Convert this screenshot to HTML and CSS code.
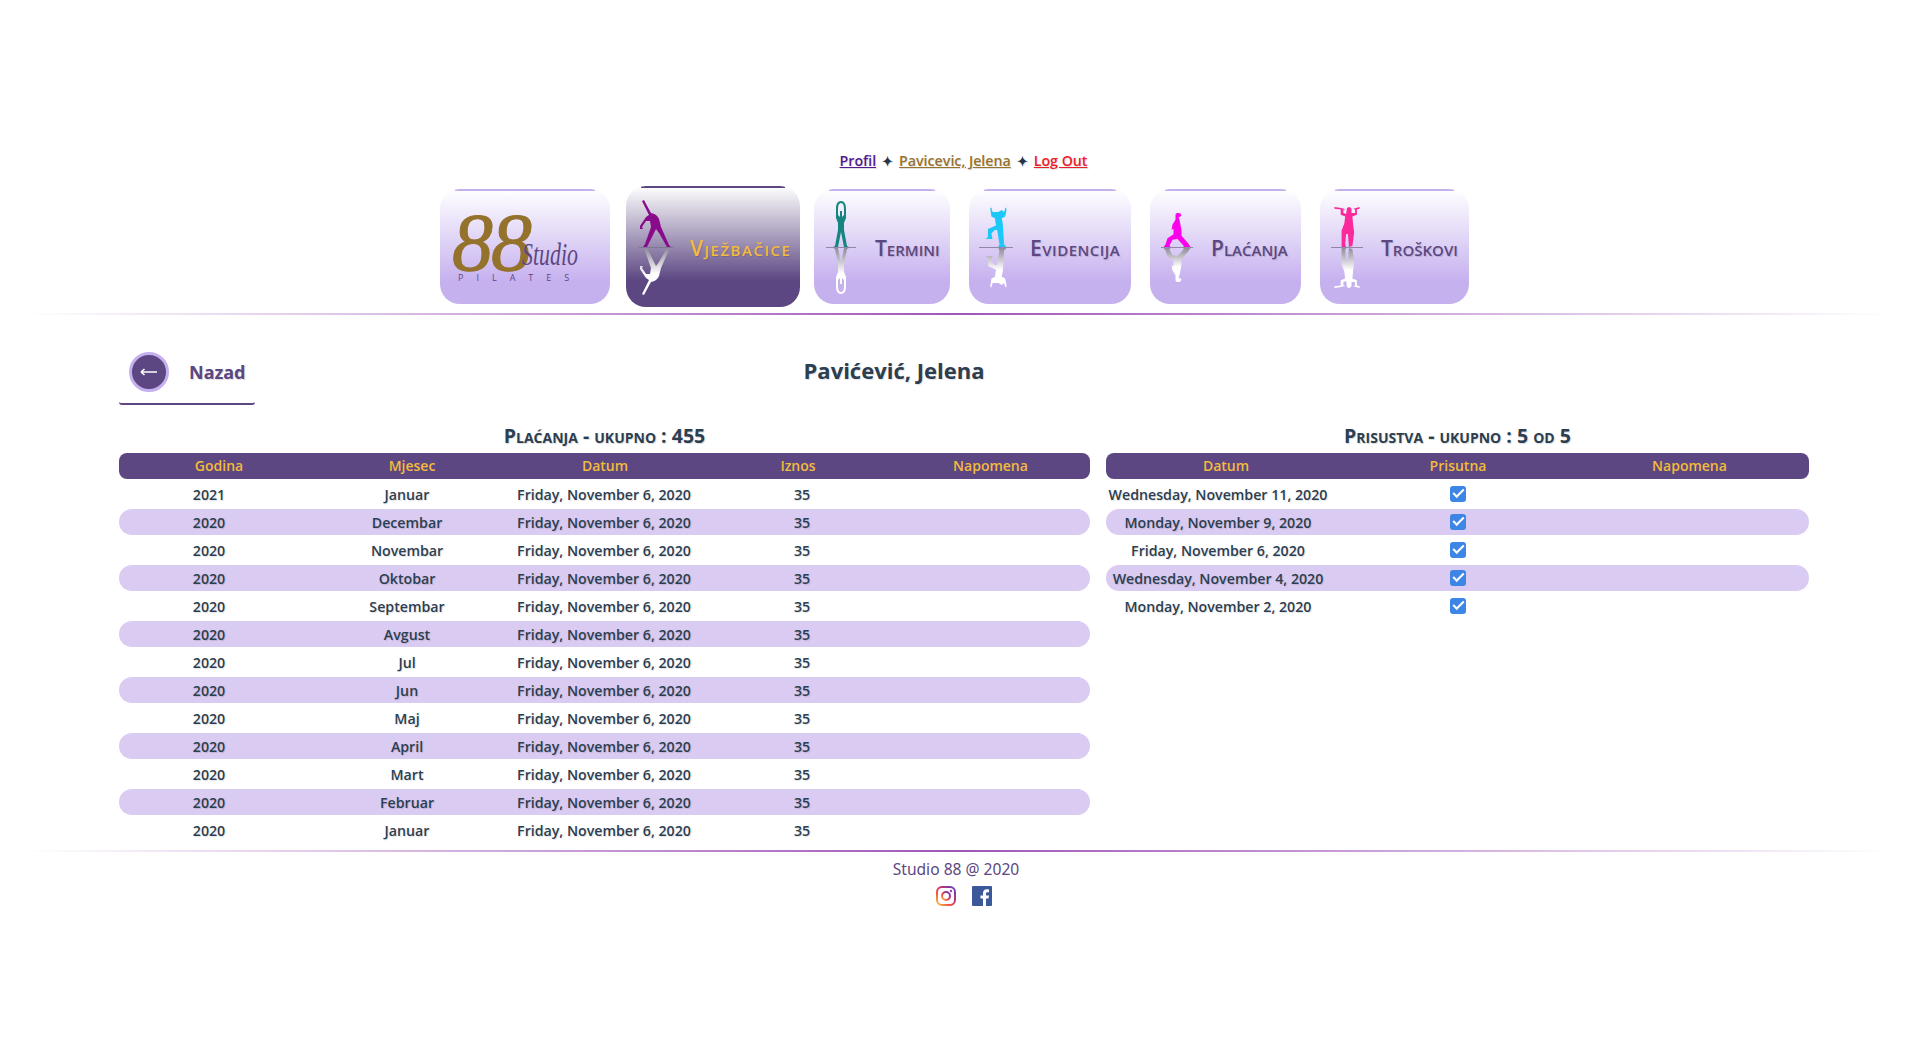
FILE: index.html
```html
<!DOCTYPE html>
<html lang="bs">
<head>
    <meta charset="UTF-8">
    <title>Studio 88 - Plaćanja</title>
    <link rel="stylesheet" href="styles.css">
</head>
<body>
    <svg class="defs" width="0" height="0" aria-hidden="true">
        <defs>
            <linearGradient id="refl" x1="0" y1="1" x2="0" y2="0">
                <stop offset="0" stop-color="#8f8a98"/>
                <stop offset="0.55" stop-color="#fff"/>
            </linearGradient>
            <linearGradient id="igGrad" x1="0" y1="1" x2="1" y2="0">
                <stop offset="0" stop-color="#fdc13c"/>
                <stop offset="0.45" stop-color="#e8344f"/>
                <stop offset="1" stop-color="#5b3ec8"/>
            </linearGradient>
            <path id="figStretch" d="M3 1 L5 0 L6 2 L12 13 Q18 14 20 19 L22 27 L30 45 L32 47 L28 47 L20 33 L17 29 L8 47 L4 47 L6 44 L12 27 L11 21 L7 21 L3 27 L4 29 L1 29 L1 26 L7 17 L10 15 Z"/>
            <path id="figStand" fill-rule="evenodd" d="M15 1 C19 1 20 5 20 9 L20 18 L18 23 L18 30 L21 46 L23 47 L18 47 L15 32 L12 47 L7 47 L9 46 L12 30 L12 23 L10 18 L10 9 C10 5 11 1 15 1 Z M15 3 C13 3 12 5 12 9 L12 15 L14 17 L14 11 L16 11 L16 17 L18 15 L18 9 C18 5 17 3 15 3 Z"/>
            <path id="figStep" d="M14 8 L17 6 L19 8 L20 4 L21 3 L21 7 L20 13 L17 15 L18 22 L19 44 L21 47 L14 47 L15 44 L13 28 L11 28 L8 32 L9 38 L3 38 L5 36 L5 27 L12 23 L11 15 L8 13 L7 4 L8 3 L9 8 L11 8 Z"/>
            <path id="figLunge" d="M12 7 C12 4 15 4 17 5 L18 8 L15 10 L16 13 L18 26 L18 33 L25 43 L27 47 L20 47 L20 45 L14 37 L9 38 L6 45 L7 47 L0 47 L2 44 L4 36 L10 31 L10 24 L8 26 L9 19 L12 13 Z"/>
            <path id="figLift" d="M2 1 L8 2 L13 3 L14 4 L12 4 L12 8 L15 9 L16 2 L19 1 L21 3 L21 8 L25 8 L25 4 L23 3 L30 1 L30 3 L27 4 L27 10 L22 12 L23 23 L24 30 L22 46 L18 47 L18 44 L17 32 L15 32 L14 44 L15 47 L10 47 L10 44 L10 28 L13 20 L14 12 L9 10 L9 4 L2 3 Z"/>
        </defs>
    </svg>

    <header class="top">
        <div class="userLinks">
            <a class="linkProfil" href="#">Profil</a>
            <span class="star">✦</span>
            <a class="linkName" href="#">Pavicevic, Jelena</a>
            <span class="star">✦</span>
            <a class="linkOut" href="#">Log Out</a>
        </div>
        <nav class="menu">
            <a class="card cardLogo" href="#">
                <svg class="logo" viewBox="0 0 170 115" width="170" height="115">
                    <text class="logo8" x="12" y="81">8<tspan dx="-2">8</tspan></text>
                    <text class="logoStudio" x="82" y="76" textLength="56" lengthAdjust="spacingAndGlyphs">Studio</text>
                    <text class="logoPilates" x="18" y="92">PILATES</text>
                </svg>
            </a>
            <a class="card cardActive" href="#">
                <svg class="fig" viewBox="0 0 34 100" width="34" height="100">
                    <use href="#figStretch" fill="#8a0a8c"/>
                    <use href="#figStretch" transform="matrix(1 0 0 -1 0 95)" fill="url(#refl)"/>
                    <rect class="figLine" x="0" y="47" width="34" height="1"/>
                </svg>
                <span class="cardLabel">Vježbačice</span>
            </a>
            <a class="card cardTermini" href="#">
                <svg class="fig" viewBox="0 0 34 100" width="34" height="100">
                    <use href="#figStand" transform="translate(2 0)" fill="#14857f"/>
                    <use href="#figStand" transform="matrix(1 0 0 -1 2 95)" fill="url(#refl)"/>
                    <rect class="figLine" x="2" y="47" width="30" height="1"/>
                </svg>
                <span class="cardLabel">Termini</span>
            </a>
            <a class="card cardEvid" href="#">
                <svg class="fig" viewBox="0 0 34 100" width="34" height="100">
                    <use href="#figStep" transform="matrix(1.15 0 0 .9 3.2 4.7)" fill="#1cc8f8"/>
                    <use href="#figStep" transform="matrix(1.15 0 0 -.9 3.2 90.3)" fill="url(#refl)"/>
                    <rect class="figLine" x="0" y="47" width="34" height="1"/>
                </svg>
                <span class="cardLabel">Evidencija</span>
            </a>
            <a class="card cardPlac" href="#">
                <svg class="fig" viewBox="0 0 34 100" width="34" height="100">
                    <use href="#figLunge" transform="matrix(1 0 0 .8 3.5 9.4)" fill="#fb00ea"/>
                    <use href="#figLunge" transform="matrix(1 0 0 -.8 3.5 85.6)" fill="url(#refl)"/>
                    <rect class="figLine" x="1" y="47" width="32" height="1"/>
                </svg>
                <span class="cardLabel">Plaćanja</span>
            </a>
            <a class="card cardTros" href="#">
                <svg class="fig" viewBox="0 0 34 100" width="34" height="100">
                    <use href="#figLift" transform="matrix(.9 0 0 .87 2.6 6.1)" fill="#fb2a9c"/>
                    <use href="#figLift" transform="matrix(.9 0 0 -.87 2.6 88.9)" fill="url(#refl)"/>
                    <rect class="figLine" x="1" y="47" width="32" height="1"/>
                </svg>
                <span class="cardLabel">Troškovi</span>
            </a>
        </nav>
    </header>
    <div class="divider"></div>

    <main class="content">
        <div class="titleRow">
            <a class="backLink" href="#">
                <span class="backCircle">
                    <svg viewBox="0 0 18 10" width="18" height="10">
                        <path d="M1 5 H17 M1 5 L4.5 2 M1 5 L4.5 8" stroke="#fff" stroke-width="1.6" fill="none"/>
                    </svg>
                </span>
                <span class="backText">Nazad</span>
            </a>
            <h1 class="personName">Pavićević, Jelena</h1>
        </div>

        <div class="tables">
            <section>
                <h2 class="tableTitle">Plaćanja - ukupno : 455</h2>
                <div class="headRow payHead">
                    <div>Godina</div><div>Mjesec</div><div>Datum</div><div>Iznos</div><div>Napomena</div>
                </div>
                <div class="row payRow"><div>2021</div><div>Januar</div><div>Friday, November 6, 2020</div><div>35</div><div></div></div>
                <div class="row payRow"><div>2020</div><div>Decembar</div><div>Friday, November 6, 2020</div><div>35</div><div></div></div>
                <div class="row payRow"><div>2020</div><div>Novembar</div><div>Friday, November 6, 2020</div><div>35</div><div></div></div>
                <div class="row payRow"><div>2020</div><div>Oktobar</div><div>Friday, November 6, 2020</div><div>35</div><div></div></div>
                <div class="row payRow"><div>2020</div><div>Septembar</div><div>Friday, November 6, 2020</div><div>35</div><div></div></div>
                <div class="row payRow"><div>2020</div><div>Avgust</div><div>Friday, November 6, 2020</div><div>35</div><div></div></div>
                <div class="row payRow"><div>2020</div><div>Jul</div><div>Friday, November 6, 2020</div><div>35</div><div></div></div>
                <div class="row payRow"><div>2020</div><div>Jun</div><div>Friday, November 6, 2020</div><div>35</div><div></div></div>
                <div class="row payRow"><div>2020</div><div>Maj</div><div>Friday, November 6, 2020</div><div>35</div><div></div></div>
                <div class="row payRow"><div>2020</div><div>April</div><div>Friday, November 6, 2020</div><div>35</div><div></div></div>
                <div class="row payRow"><div>2020</div><div>Mart</div><div>Friday, November 6, 2020</div><div>35</div><div></div></div>
                <div class="row payRow"><div>2020</div><div>Februar</div><div>Friday, November 6, 2020</div><div>35</div><div></div></div>
                <div class="row payRow"><div>2020</div><div>Januar</div><div>Friday, November 6, 2020</div><div>35</div><div></div></div>
            </section>
            <section>
                <h2 class="tableTitle">Prisustva - ukupno : 5 od 5</h2>
                <div class="headRow attHead">
                    <div>Datum</div><div>Prisutna</div><div>Napomena</div>
                </div>
                <div class="row attRow"><div>Wednesday, November 11, 2020</div><div><span class="check"></span></div><div></div></div>
                <div class="row attRow"><div>Monday, November 9, 2020</div><div><span class="check"></span></div><div></div></div>
                <div class="row attRow"><div>Friday, November 6, 2020</div><div><span class="check"></span></div><div></div></div>
                <div class="row attRow"><div>Wednesday, November 4, 2020</div><div><span class="check"></span></div><div></div></div>
                <div class="row attRow"><div>Monday, November 2, 2020</div><div><span class="check"></span></div><div></div></div>
            </section>
        </div>
    </main>

    <div class="divider dividerBottom"></div>
    <footer class="footer">
        <div class="footerText">Studio 88 @ 2020</div>
        <div class="social">
            <svg viewBox="0 0 20 20" width="20" height="20">
                <rect x="1" y="1" width="18" height="18" rx="5" fill="none" stroke="url(#igGrad)" stroke-width="2"/>
                <circle cx="10" cy="10" r="4" fill="none" stroke="url(#igGrad)" stroke-width="2"/>
                <circle cx="15" cy="5" r="1.2" fill="#a33bb0"/>
            </svg>
            <svg viewBox="0 0 20 20" width="20" height="20">
                <rect width="20" height="20" rx="1" fill="#3b5998"/>
                <path d="M14 20 V12.5 H16.5 L17 9.5 H14 V7.8 C14 6.9 14.3 6.3 15.5 6.3 H17 V3.5 C16.5 3.4 15.7 3.3 14.8 3.3 C12.5 3.3 11 4.7 11 7.3 V9.5 H8.5 V12.5 H11 V20 Z" fill="#fff"/>
            </svg>
        </div>
    </footer>
</body>
</html>
```

FILE: styles.css
```css
body {
    margin: 0;
    font-family: 'Open Sans', sans-serif;
    background-color: #fff;
    color: #2c3e50;
}

.defs {
    position: absolute;
}

a {
    color: inherit;
    text-decoration: none;
}

.top {
    padding-top: 150px;
}

.userLinks {
    display: flex;
    justify-content: center;
    gap: 6px;
    height: 22px;
    margin-left: 12px;
    line-height: 22px;
    font-size: 14.2px;
    font-weight: 600;
    text-shadow: 1px 1px 1px rgba(0, 0, 0, 0.12);
}

.userLinks a {
    text-decoration: underline;
}

.linkProfil { color: #55188f; }
.linkName { color: #96722d; }
.linkOut { color: #e8202a; }
.star { color: #24364e; font-size: 13px; }

.menu {
    display: flex;
    justify-content: center;
    gap: 19px;
    margin-top: 17px;
    margin-left: -6px;
}

.card {
    display: flex;
    align-items: center;
    box-sizing: border-box;
    height: 115px;
    padding-left: 10px;
    border-radius: 20px;
    background:
        linear-gradient(#c5b0ee, #c5b0ee) top center / calc(100% - 30px) 2px no-repeat,
        linear-gradient(to bottom, #fff 0%, #c6b1ef 80%);
    color: #5c4782;
}

.cardLogo { width: 170px; padding-left: 0; }
.cardActive {
    width: 174px;
    height: 121px;
    margin: -3px -5px -3px -3px;
    padding-left: 13px;
    background:
        linear-gradient(#5c4782, #5c4782) top center / calc(100% - 30px) 2px no-repeat,
        linear-gradient(to bottom, #fff 0%, #5c4782 78%);
    color: #f3bb3c;
}
.cardTermini { width: 136px; }
.cardEvid { width: 162px; }
.cardPlac { width: 151px; }
.cardTros { width: 149px; }

.fig {
    flex: none;
    margin-top: 7px;
}

.figLine {
    fill: #77708a;
    opacity: 0.75;
}

.cardLabel {
    margin-left: 17px;
    margin-top: 3px;
    font-size: 21px;
    font-weight: 600;
    font-variant: small-caps;
    white-space: nowrap;
    text-shadow: 1px 1px 1px rgba(0, 0, 0, 0.15);
}

.cardEvid .cardLabel {
    letter-spacing: 0.5px;
}

.cardActive .cardLabel {
    margin-left: 17px;
    letter-spacing: 1.5px;
}

.logo8 {
    font-family: 'Liberation Serif', serif;
    font-style: italic;
    font-size: 82px;
    fill: #94722c;
    stroke: #94722c;
    stroke-width: 1px;
}

.logoStudio {
    font-family: 'Liberation Serif', serif;
    font-style: italic;
    font-size: 32px;
    fill: #5c4782;
}

.logoPilates {
    font-family: 'Open Sans', sans-serif;
    font-size: 9px;
    letter-spacing: 13px;
    fill: #5c4782;
}

.divider {
    height: 2px;
    margin: 9px 25px 0;
    background: linear-gradient(to right, rgba(160, 85, 185, 0), #a055b9 50%, rgba(160, 85, 185, 0));
}

.content {
    width: 1690px;
    margin-left: 119px;
}

.titleRow {
    display: flex;
    align-items: flex-start;
    margin-top: 37px;
}

.backLink {
    display: flex;
    align-items: center;
    box-sizing: border-box;
    width: 136px;
    height: 53px;
    padding: 0 0 12px 10px;
    border-bottom: 2px solid #5c4782;
    border-radius: 0 0 3px 3px;
}

.backCircle {
    display: flex;
    align-items: center;
    justify-content: center;
    box-sizing: border-box;
    width: 40px;
    height: 40px;
    border: 3px solid #c5b0ee;
    border-radius: 50%;
    background-color: #5c4782;
}

.backText {
    margin-left: 20px;
    font-family: 'Noto Sans', sans-serif;
    font-size: 18px;
    font-weight: 700;
    color: #5c4782;
    text-shadow: 1px 1px 1px rgba(0, 0, 0, 0.15);
}

.personName {
    width: 1278px;
    margin: 3px 0 0;
    font-size: 22px;
    font-weight: 700;
    line-height: 30px;
    text-align: center;
    text-shadow: 1px 1px 1px rgba(0, 0, 0, 0.12);
}

.tables {
    display: grid;
    grid-template-columns: 971px 703px;
    gap: 16px;
    margin-top: 20px;
}

.tableTitle {
    height: 28px;
    margin: 0;
    font-size: 19.5px;
    font-weight: 700;
    font-variant: small-caps;
    line-height: 22px;
    text-align: center;
    text-shadow: 1px 1px 1px rgba(0, 0, 0, 0.15);
}

.headRow {
    display: grid;
    height: 26px;
    margin-bottom: 2px;
    border-radius: 8px;
    background-color: #5c4782;
    color: #f3bb3c;
    font-size: 14px;
    font-weight: 600;
    line-height: 26px;
    text-align: center;
}

.payHead { grid-template-columns: 200px 186px 200px 186px 199px; }
.attHead { grid-template-columns: 240px 224px 239px; }

.row {
    display: grid;
    align-items: center;
    height: 26px;
    margin-bottom: 2px;
    border-radius: 13px;
    font-size: 14.2px;
    font-weight: 600;
    text-align: center;
    white-space: nowrap;
    text-shadow: 1px 1px 1px rgba(0, 0, 0, 0.12);
}

.row:nth-of-type(odd) {
    background-color: #dacbf2;
}

.payRow { grid-template-columns: 180px 216px 178px 218px 179px; }
.attRow { grid-template-columns: 224px 256px 223px; }

.check {
    display: block;
    position: relative;
    width: 16px;
    height: 16px;
    margin: -1px auto 0;
    border-radius: 3px;
    background-color: #3e86e6;
}

.check::after {
    content: "";
    position: absolute;
    left: 3px;
    top: 3px;
    width: 9px;
    height: 4px;
    border-left: 2px solid #fff;
    border-bottom: 2px solid #fff;
    transform: rotate(-45deg);
}

.dividerBottom {
    margin-top: 5px;
}

.footer {
    text-align: center;
    color: #5c4782;
}

.footerText {
    margin-top: 7px;
    margin-right: 3px;
    font-family: 'Noto Sans', sans-serif;
    font-size: 15.6px;
    line-height: 20px;
}

.social {
    display: flex;
    justify-content: center;
    gap: 16px;
    margin-top: 7px;
    margin-left: 12px;
}
```
